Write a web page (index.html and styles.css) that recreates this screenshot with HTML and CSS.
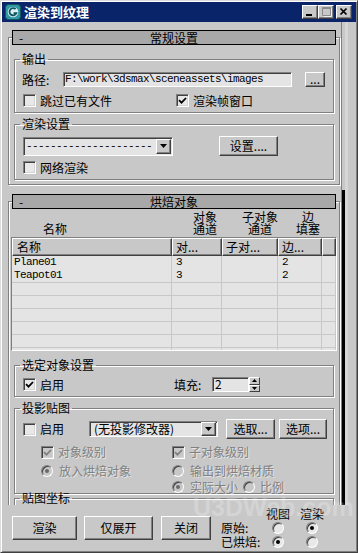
FILE: index.html
```html
<!DOCTYPE html>
<html lang="zh">
<head>
<meta charset="utf-8">
<title>渲染到纹理</title>
<link rel="stylesheet" href="styles.css">
</head>
<body>
<div class="window">
  <div class="titlebar">
    <svg class="appicon" width="16" height="16" viewBox="0 0 16 16">
      <rect x="0.5" y="0.5" width="15" height="15" rx="3" fill="#2f9aa6" stroke="#0f5560"/>
      <circle cx="8" cy="8" r="5.3" fill="#d8f0f2"/>
      <path d="M10.6 5.2 A3.6 3.6 0 1 0 11.4 9.2 L8.6 9.2" fill="none" stroke="#0f5560" stroke-width="1.8"/>
    </svg>
    <span class="title">渲染到纹理</span>
    <div class="tbtns">
      <span class="tbtn"><svg width="14" height="12" viewBox="0 0 14 12"><rect x="3" y="8" width="6" height="2" fill="#000"/></svg></span>
      <span class="tbtn"><svg width="14" height="12" viewBox="0 0 14 12"><path d="M3.5 1.5h8v8h-8z M3.5 2.5h8" fill="none" stroke="#8a8a8a"/><path d="M4.5 10.5h8v-8" fill="none" stroke="#f0f0f0"/></svg></span>
      <span class="tbtn close"><svg width="14" height="12" viewBox="0 0 14 12"><path d="M3.5 2.5l6 6M9.5 2.5l-6 6" stroke="#000" stroke-width="1.7"/></svg></span>
    </div>
  </div>

  <div class="client">
    <div class="rollouts">
      <fieldset class="rollout r1">
        <legend class="rhead"><span class="rbar"><span class="minus">-</span><span class="rtitle">常规设置</span><span></span></span></legend>

        <fieldset class="group g1">
          <legend>输出</legend>
          <div class="row prow">
            <span class="plabel">路径:</span>
            <span class="field pathfield">F:\work\3dsmax\sceneassets\images</span>
            <span class="btn dotbtn">...</span>
          </div>
          <div class="row crow">
            <span class="chk w152"><span class="box"></span>跳过已有文件</span>
            <span class="chk"><span class="box"><svg width="9" height="9" viewBox="0 0 9 9"><path d="M1 4.2 L3.5 6.7 L8 2" fill="none" stroke="#000" stroke-width="1.8"/></svg></span>渲染帧窗口</span>
          </div>
        </fieldset>

        <fieldset class="group g2">
          <legend>渲染设置</legend>
          <div class="row srow">
            <span class="combo c1"><span class="ctext dashes">---------------------</span><span class="carrow"><svg width="7" height="4" viewBox="0 0 7 4"><path d="M0 0h7L3.5 4z" fill="#000"/></svg></span></span>
            <span class="btn setbtn">设置....</span>
          </div>
          <div class="row crow2">
            <span class="chk"><span class="box"></span>网络渲染</span>
          </div>
        </fieldset>
      </fieldset>

      <fieldset class="rollout r2">
        <legend class="rhead"><span class="rbar"><span class="minus">-</span><span class="rtitle">烘焙对象</span><span></span></span></legend>

        <div class="coltitles">
          <span class="ctn">名称</span>
          <span class="ct ct1">对象<br>通道</span>
          <span class="ct ct2">子对象<br>通道</span>
          <span class="ct ct3">边<br>填塞</span>
        </div>

        <div class="list">
          <div class="lhead"><span class="hname">名称</span><span>对...</span><span>子对...</span><span>边...</span><span></span></div>
          <div class="lrow"><span class="dn">Plane01</span><span>3</span><span></span><span>2</span><span></span></div>
          <div class="lrow"><span class="dn">Teapot01</span><span>3</span><span></span><span>2</span><span></span></div>
          <div class="lrow sep"><span></span><span></span><span></span><span></span><span></span></div>
          <div class="lrow sep"><span></span><span></span><span></span><span></span><span></span></div>
          <div class="lrow sep"><span></span><span></span><span></span><span></span><span></span></div>
          <div class="lrow sep"><span></span><span></span><span></span><span></span><span></span></div>
          <div class="lrow sep"><span></span><span></span><span></span><span></span><span></span></div>
          <div class="lrow sep"><span></span><span></span><span></span><span></span><span></span></div>
        </div>

        <fieldset class="group g3">
          <legend>选定对象设置</legend>
          <div class="row row3">
            <span class="chk w151"><span class="box"><svg width="9" height="9" viewBox="0 0 9 9"><path d="M1 4.2 L3.5 6.7 L8 2" fill="none" stroke="#000" stroke-width="1.8"/></svg></span>启用</span>
            <span class="filllabel">填充:</span>
            <span class="spin">
              <span class="field spinfield">2</span>
              <span class="spinbtns">
                <span class="sb"><svg width="5" height="3" viewBox="0 0 5 3"><path d="M0 3h5L2.5 0z" fill="#000"/></svg></span>
                <span class="sb"><svg width="5" height="3" viewBox="0 0 5 3"><path d="M0 0h5L2.5 3z" fill="#000"/></svg></span>
              </span>
            </span>
          </div>
        </fieldset>

        <fieldset class="group g4">
          <legend>投影贴图</legend>
          <div class="row row4a">
            <span class="chk w66"><span class="box"></span>启用</span>
            <span class="combo c2"><span class="ctext">(无投影修改器)</span><span class="carrow"><svg width="7" height="4" viewBox="0 0 7 4"><path d="M0 0h7L3.5 4z" fill="#000"/></svg></span></span>
            <span class="btn pickbtn">选取...</span>
            <span class="btn optbtn">选项...</span>
          </div>
          <div class="sub s2">
            <span class="col"><span class="chk dis"><span class="box dbox"><svg width="9" height="9" viewBox="0 0 9 9"><path d="M1 4.2 L3.5 6.7 L8 2" fill="none" stroke="#808080" stroke-width="1.8"/></svg></span>对象级别</span></span>
            <span class="chk dis"><span class="box dbox"><svg width="9" height="9" viewBox="0 0 9 9"><path d="M1 4.2 L3.5 6.7 L8 2" fill="none" stroke="#808080" stroke-width="1.8"/></svg></span>子对象级别</span>
          </div>
          <div class="sub s3">
            <span class="col"><span class="chk dis rchk"><span class="radio dradio"><span class="dot ddot"></span></span>放入烘焙对象</span></span>
            <span class="chk dis rchk"><span class="radio dradio"></span>输出到烘焙材质</span>
          </div>
          <div class="sub s4">
            <span class="col"></span>
            <span class="chk dis rchk"><span class="radio dradio"><span class="dot ddot"></span></span>实际大小</span>
            <span class="chk dis rchk prop"><span class="radio dradio"></span>比例</span>
          </div>
        </fieldset>

        <fieldset class="group g5">
          <legend>贴图坐标</legend>
          <div class="filler"></div>
        </fieldset>
      </fieldset>
    </div>
    <div class="scroll"><div class="thumb"></div></div>
  </div>

  <div class="bottom">
    <span class="btn bbtn b1">渲染</span>
    <span class="btn bbtn b2">仅展开</span>
    <span class="btn bbtn b3">关闭</span>
    <div class="rgrid">
      <span></span><span class="gh">视图</span><span class="gh">渲染</span>
      <span class="gl">原始:</span><span class="gc"><span class="radio"></span></span><span class="gc"><span class="radio"><span class="dot"></span></span></span>
      <span class="gl">已烘焙:</span><span class="gc"><span class="radio"><span class="dot"></span></span></span><span class="gc"><span class="radio"></span></span>
    </div>
  </div>

  <div class="watermark">U3DWeb.com</div>
</div>
</body>
</html>
```

FILE: styles.css
```css
* { box-sizing: border-box; margin: 0; padding: 0; }
html, body { width: 358px; height: 553px; overflow: hidden; }
body {
  background: #c8c8c8;
  font-family: "Noto Sans CJK SC", "Liberation Sans", sans-serif;
  font-size: 12px;
  line-height: 14px;
  color: #000;
}

.window {
  position: relative;
  width: 358px;
  height: 553px;
  display: flex;
  flex-direction: column;
  border: 1px solid;
  border-color: #dcdcdc #404040 #404040 #dcdcdc;
  box-shadow: inset 1px 1px #fff, inset -1px -1px #808080;
  padding: 1px;
  background: #c8c8c8;
}

/* title bar */
.titlebar {
  flex: none;
  height: 20px;
  display: flex;
  align-items: center;
  background: #0a246a;
  color: #fff;
  padding: 0 4px 0 2px;
}
.appicon { flex: none; margin-left: 1px; }
.title { margin-left: 3px; font-weight: 700; font-size: 13px; line-height: 20px; }
.tbtns { margin-left: auto; display: flex; }
.tbtn {
  width: 16px; height: 14px;
  background: #c8c8c8;
  border: 1px solid;
  border-color: #fff #404040 #404040 #fff;
  box-shadow: inset -1px -1px #808080;
  display: flex;
}
.tbtn.close { margin-left: 2px; }

/* client area */
.client { flex: 1; min-height: 0; display: flex; padding-right: 8px; }
.rollouts { flex: none; width: 339px; padding: 8px 0 0 6px; overflow: hidden; }
.scroll { flex: none; width: 7px; border-left: 1px solid #808080; box-shadow: inset -3px 0 #d6d6d6; }
.thumb { margin-top: 168px; width: 3px; height: 315px; background: #000; }

/* rollouts */
.rollout {
  width: 332px;
  min-width: 0;
  border: 1px solid #808080;
  box-shadow: inset 1px 1px #fff, 1px 1px #fff;
  padding: 0 3px 4px;
}
.r2 { margin-top: 9px; }
.rhead {
  width: 324px;
  height: 15px;
  border: 1px solid #000;
  background: #a8a8a8;
  padding: 0;
}
.rbar {
  display: grid;
  grid-template-columns: 1fr auto 1fr;
  height: 13px;
  line-height: 13px;
  align-items: center;
}
.minus { padding-left: 6px; }

/* group boxes */
.group {
  margin: 7px 2px 0;
  min-width: 0;
  border: 1px solid #808080;
  box-shadow: inset 1px 1px #fff, 1px 1px #fff;
  padding: 6px 6px 5px 7px;
}
.group > legend {
  padding: 0 2px;
  margin-left: -2px;
  height: 14px;
  line-height: 14px;
}

.row { display: flex; align-items: center; }
.prow { height: 15px; }
.plabel { width: 41px; }

.field {
  height: 15px;
  background: #e4e4e4;
  border: 1px solid;
  border-color: #808080 #fff #fff #808080;
  box-shadow: inset 1px 1px #404040;
}
.pathfield {
  width: 229px;
  padding-left: 1px;
  font: 11px/13px "Liberation Mono", monospace;
  letter-spacing: -0.6px;
  white-space: nowrap;
  overflow: hidden;
}

.btn {
  display: flex;
  align-items: center;
  justify-content: center;
  background: #c8c8c8;
  border: 1px solid;
  border-color: #fff #404040 #404040 #fff;
  box-shadow: inset -1px -1px #808080;
  white-space: nowrap;
}
.dotbtn { width: 20px; height: 15px; margin-left: 13px; line-height: 10px; padding-bottom: 2px; }

.crow { margin-top: 7px; height: 13px; }
.chk { display: flex; align-items: center; gap: 4px; margin-left: 1px; white-space: nowrap; }
.w152 { width: 152px; }
.w151 { width: 151px; }
.w66 { width: 66px; }

.box {
  flex: none;
  width: 13px; height: 13px;
  border: 1px solid;
  border-color: #808080 #fff #fff #808080;
  box-shadow: inset 1px 1px #404040, inset -1px -1px #d4d4d4;
  background: #e8e8e8;
  display: flex;
  align-items: center;
  justify-content: center;
}
.dbox { background: #c8c8c8; }

.radio {
  flex: none;
  width: 12px; height: 12px;
  border-radius: 50%;
  border: 1px solid;
  border-color: #808080 #fff #fff #808080;
  box-shadow: inset 1px 1px #404040;
  background: #e8e8e8;
  display: flex;
  align-items: center;
  justify-content: center;
}
.dradio { background: #c8c8c8; }
.dot { width: 4px; height: 4px; border-radius: 50%; background: #000; }
.ddot { background: #6a6a6a; }

.dis { color: #808080; text-shadow: 1px 1px 0 rgba(255,255,255,.55); }
.rchk { gap: 6px; }
.prop { margin-left: 5px; gap: 5px; }

/* combo boxes */
.g2 { margin-top: 4px; padding-top: 5px; }
.srow { height: 20px; }
.combo {
  display: flex;
  background: #e4e4e4;
  border: 1px solid;
  border-color: #808080 #fff #fff #808080;
  box-shadow: inset 1px 1px #404040;
  padding: 1px 1px 1px 2px;
}
.c1 { width: 150px; height: 19px; margin-left: 1px; }
.ctext { flex: 1; overflow: hidden; white-space: nowrap; line-height: 15px; }
.dashes { font: 11px/15px "Liberation Mono", monospace; letter-spacing: -0.6px; }
.carrow {
  flex: none;
  width: 15px;
  background: #c8c8c8;
  border: 1px solid;
  border-color: #fff #404040 #404040 #fff;
  box-shadow: inset -1px -1px #808080;
  display: flex;
  align-items: center;
  justify-content: center;
}
.setbtn { width: 59px; height: 20px; margin-left: 46px; }
.crow2 { margin-top: 5px; height: 13px; }

/* bake objects */
.coltitles { display: flex; margin-top: 2px; height: 24px; line-height: 12px; }
.ctn { width: 168px; padding: 12px 0 0 31px; }
.ct { text-align: center; }
.ct1 { width: 50px; }
.ct2 { width: 56px; margin-left: 2px; }
.ct3 { width: 40px; }

.list {
  margin: 2px -1px 0;
  height: 114px;
  border: 1px solid;
  border-color: #808080 #fff #fff #808080;
  background: #e4e4e4;
  overflow: hidden;
}
.lhead, .lrow { display: grid; grid-template-columns: 160px 50px 56px 44px 1fr; }
.lhead { height: 18px; }
.lhead span {
  border: 1px solid;
  border-color: #fff #404040 #404040 #fff;
  box-shadow: inset -1px -1px #808080;
  background: #c8c8c8;
  padding-left: 3px;
  line-height: 15px;
  white-space: nowrap;
  overflow: hidden;
}
.lhead .hname { padding-left: 4px; }
.lrow {
  height: 13px;
  font: 11px/12px "Liberation Mono", monospace;
  letter-spacing: -0.6px;
}
.lrow.sep { border-top: 1px solid #c8c8c8; }
.lrow span { border-right: 1px solid #c8c8c8; padding-left: 4px; white-space: nowrap; }
.lrow .dn { padding-left: 2px; }

/* selected object settings */
.g3 { margin-top: 7px; padding-top: 5px; padding-bottom: 4px; }
.row3 { height: 15px; }
.filllabel { width: 38px; }
.spin { display: flex; height: 15px; }
.spinfield { width: 37px; padding-left: 2px; line-height: 12px; }
.spinbtns { width: 11px; display: flex; flex-direction: column; }
.sb {
  flex: 1;
  background: #c8c8c8;
  border: 1px solid;
  border-color: #fff #404040 #404040 #fff;
  display: flex;
  align-items: center;
  justify-content: center;
}

/* projection mapping */
.g4 { margin-top: 4px; padding-top: 4px; padding-bottom: 0; }
.row4a { height: 20px; }
.c2 { width: 129px; height: 16px; padding-top: 0; padding-bottom: 0; }
.c2 .ctext { line-height: 14px; padding-left: 2px; overflow: visible; }
.pickbtn { width: 49px; height: 20px; margin-left: 8px; }
.optbtn { width: 48px; height: 20px; margin-left: 4px; }
.sub { display: flex; align-items: center; padding-left: 18px; height: 14px; }
.sub .col { width: 131px; display: flex; }
.s2 { margin-top: 6px; }
.s3 { margin-top: 5px; }
.s4 { margin-top: 3px; height: 12px; }

.g5 { margin-top: -3px; }
.filler { height: 30px; }

/* bottom bar */
.bottom { flex: none; height: 46px; display: flex; align-items: flex-start; padding-left: 10px; }
.bbtn { height: 24px; margin-top: 11px; }
.b1 { width: 65px; }
.b2 { width: 69px; margin-left: 7px; }
.b3 { width: 50px; margin-left: 8px; }
.rgrid {
  margin-left: 10px;
  margin-top: 2px;
  display: grid;
  grid-template-columns: 37px 28px 28px;
  column-gap: 6px;
  grid-auto-rows: 14px;
  align-items: center;
}
.gh { text-align: center; }
.gl { line-height: 12px; white-space: nowrap; }
.gc { display: flex; justify-content: center; }

.watermark {
  position: absolute;
  left: 192px;
  top: 492px;
  font: 700 25px/28px "Liberation Sans", sans-serif;
  color: rgba(255,255,255,.22);
  pointer-events: none;
}
```
